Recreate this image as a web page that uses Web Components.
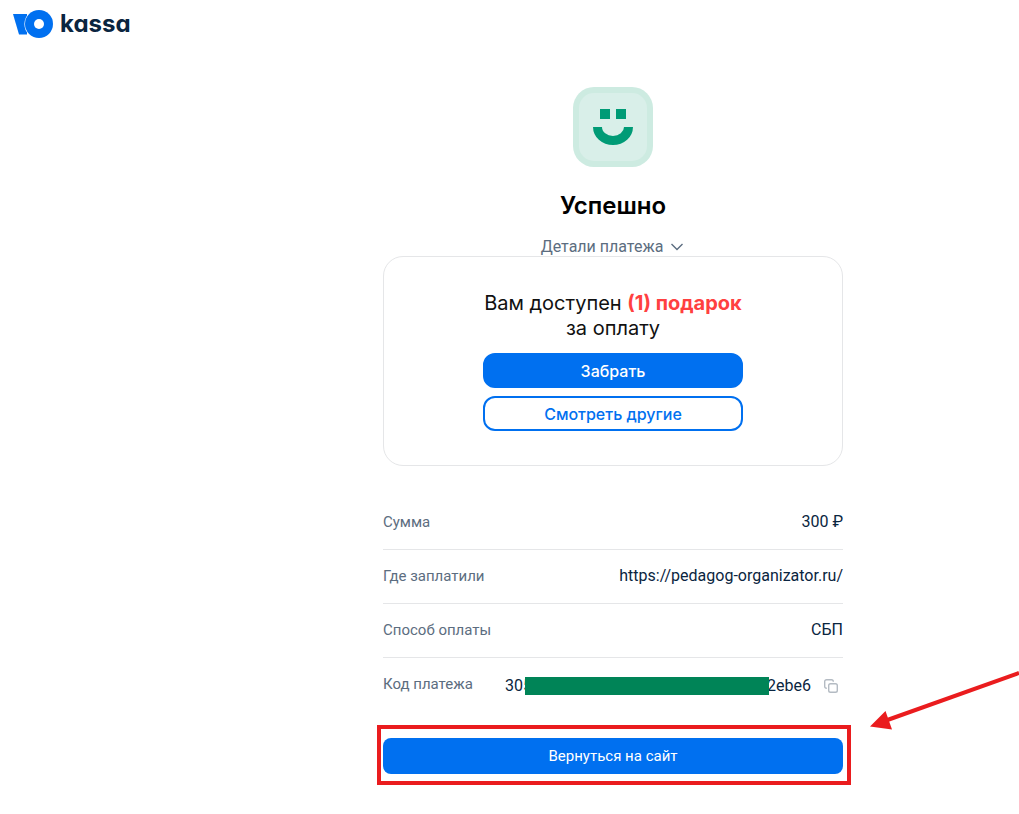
<!DOCTYPE html>
<html lang="ru">
<head>
<meta charset="utf-8">
<meta name="viewport" content="width=device-width, initial-scale=1">
<title>Успешно — ЮKassa</title>
<style>
  body {
    margin: 0;
    background: #fff;
    color: #0a2540;
    font-family: Roboto, "Liberation Sans", sans-serif;
    font-size: 16px;
    line-height: 20px;
    overflow-x: clip;
    --blue: #0070f0;
    --muted: #5c6d80;
    --line: #e5e6e8;
    --mark: #ea1c1e;
    --display: Inter, "Open Sans", sans-serif;
  }
</style>
</head>
<body>
<payment-page>
  <brand-logo slot="header"></brand-logo>
  <payment-status>Успешно</payment-status>
  <gift-card></gift-card>
  <payment-details></payment-details>
  <return-action>Вернуться на сайт</return-action>
</payment-page>

<script>
const define = (name, html) => {
  const template = document.createElement('template');
  template.innerHTML = html;
  customElements.define(name, class extends HTMLElement {
    constructor() {
      super();
      this.attachShadow({ mode: 'open' }).append(template.content.cloneNode(true));
    }
  });
};

define('payment-page', `
  <style>
    :host { display: block; }
    header { display: flex; padding: 8px 13px; }
    main { padding: 0 0 40px 207px; }
    .column { display: flex; flex-direction: column; max-width: 460px; margin: 39px auto 0; }
    @media (max-width: 760px) { main { padding: 0 16px 40px; } }
  </style>
  <header><slot name="header"></slot></header>
  <main><div class="column"><slot></slot></div></main>
`);

define('brand-logo', `
  <style>
    :host { display: block; }
    a { display: flex; align-items: center; gap: 7px; color: #0a2540; text-decoration: none;
        font: 700 24px/32px Inter, "Noto Sans", sans-serif; font-feature-settings: "cv11"; }
    svg { display: block; }
  </style>
  <a href="#">
    <svg width="40" height="28" viewBox="0 0 40 28" aria-hidden="true">
      <path d="M0 4H14V24.500H6z" fill="#0070f0"/>
      <circle cx="26" cy="14" r="14.600" fill="#fff"/>
      <circle cx="26" cy="14" r="14" fill="#0070f0"/>
      <circle cx="26" cy="14" r="5" fill="#fff"/>
    </svg>
    <span>kassa</span>
  </a>
`);

define('payment-status', `
  <style>
    :host { display: flex; flex-direction: column; align-items: center; }
    svg { display: block; }
    h1 { margin: 23px 0 0; color: #000; font: 600 24px/32px var(--display); }
    button { display: flex; align-items: center; gap: 8px; margin-top: 16px; padding: 0 2px 0 0; border: 0;
             background: none; color: var(--muted); font: 16px/18px Roboto, sans-serif; cursor: pointer; }
  </style>
  <svg width="80" height="80" viewBox="0 0 80 80" aria-hidden="true">
    <rect width="80" height="80" rx="21" fill="#cdebe1"/>
    <rect x="6" y="6" width="68" height="68" rx="15" fill="#d9efe9"/>
    <path d="M27 22h10v10H27zM43 22h10v10H43zM20 40a20 18 0 0 0 40 0H51a11 9 0 0 1-22 0z" fill="#009b76"/>
  </svg>
  <h1><slot></slot></h1>
  <button type="button" aria-expanded="true">Детали платежа
    <svg width="12" height="8" viewBox="0 0 12 8" fill="none" stroke="currentColor" stroke-width="1.400" aria-hidden="true"><path d="M.5 1 6 6.500 11.500 1"/></svg>
  </button>
`);

define('gift-card', `
  <style>
    :host { display: flex; flex-direction: column; align-items: center; padding: 34px 20px;
            border: 1px solid var(--line); border-radius: 20px; }
    h2 { margin: 0 0 12px; color: #111; font: 400 20px/25px var(--display); text-align: center; }
    strong { color: #ff4040; font-weight: 700; }
    div { display: flex; flex-direction: column; gap: 8px; width: 100%; max-width: 260px; }
    button { height: 35px; padding: 0; border: 2px solid var(--blue); border-radius: 12px;
             background: var(--blue); color: #fff; font: 500 16px/20px var(--display); cursor: pointer; }
    .plain { background: #fff; color: var(--blue); }
  </style>
  <h2>Вам доступен <strong>(1) подарок</strong><br>за оплату</h2>
  <div>
    <button type="button">Забрать</button>
    <button type="button" class="plain">Смотреть другие</button>
  </div>
`);

define('copy-button', `
  <style>
    :host { display: block; }
    button { display: block; padding: 0; border: 0; background: none; color: #b4bbc3; cursor: pointer; }
    svg { display: block; }
  </style>
  <button type="button" aria-label="Скопировать">
    <svg width="14" height="14" viewBox="0 0 14 14" fill="none" stroke="currentColor" stroke-width="1.400" aria-hidden="true">
      <rect x="4.700" y="4.700" width="8.600" height="8.600" rx="1.800"/>
      <path d="M2.800 9.300H2.500A1.800 1.800 0 0 1 .7 7.500v-5A1.800 1.800 0 0 1 2.500.7h5A1.800 1.800 0 0 1 9.300 2.500v.3"/>
    </svg>
  </button>
`);

define('payment-details', `
  <style>
    :host { display: block; margin-top: 30px; }
    table { width: 100%; border-collapse: collapse; }
    th, td { height: 51px; padding: 0 0 2px; border-bottom: 1px solid var(--line); }
    th { color: var(--muted); font-size: 15px; font-weight: 400; text-align: left; white-space: nowrap; }
    td { color: #0a2540; text-align: right; }
    tr:last-child > * { border: 0; }
    .code { display: flex; align-items: center; justify-content: flex-end; padding: 4px 5px 0 0; }
    .bar { width: 244px; height: 18px; margin: 0 -2px 0 -7px; background: #008457; z-index: 1; }
    copy-button { margin-left: 13px; }
  </style>
  <table>
    <tr><th scope="row">Сумма</th><td>300 ₽</td></tr>
    <tr><th scope="row">Где заплатили</th><td>https://pedagog-organizator.ru/</td></tr>
    <tr><th scope="row">Способ оплаты</th><td>СБП</td></tr>
    <tr><th scope="row">Код платежа</th><td><div class="code"><span>305</span><span class="bar"></span><span>2ebe6</span><copy-button></copy-button></div></td></tr>
  </table>
`);

define('return-action', `
  <style>
    :host { display: block; position: relative; margin-top: 27px; }
    button { display: block; width: 100%; height: 36px; padding: 0; border: 0; border-radius: 8px;
             background: var(--blue); color: #fff; font: 400 15px/20px Roboto, sans-serif; cursor: pointer; }
    .frame { position: absolute; inset: -13px -8px -11px -6px; border: 4px solid var(--mark); pointer-events: none; }
    .arrow { position: absolute; left: 100%; bottom: 40px; margin-left: 27px; pointer-events: none; }
  </style>
  <button type="button"><slot></slot></button>
  <div class="frame"></div>
  <svg class="arrow" width="149" height="64" viewBox="870 670 149 64" aria-hidden="true">
    <path d="M1019 673 886 720.500" stroke="#ea1c1e" stroke-width="4"/>
    <path d="M870 726.500 885.500 711 892 729.500z" fill="#ea1c1e"/>
  </svg>
`);
</script>
</body>
</html>
